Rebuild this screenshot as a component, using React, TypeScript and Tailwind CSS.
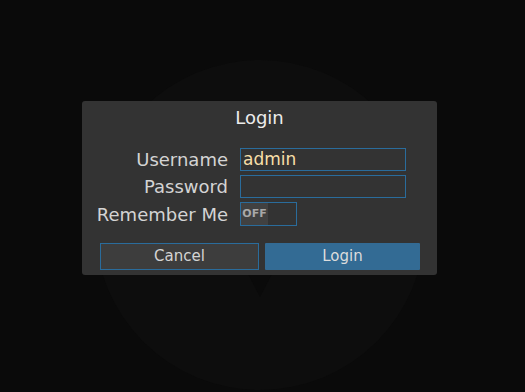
export default function App() {
  const font = { fontFamily: '"DejaVu Sans", "Noto Sans", sans-serif' };
  return (
    <div
      className="relative w-[525px] h-[392px] bg-[#0a0a0a] overflow-hidden"
      style={font}
    >
      {/* faint logo behind the dialog */}
      <svg
        className="absolute left-0 top-0"
        width="525"
        height="392"
        viewBox="0 0 525 392"
      >
        <circle cx="260" cy="225" r="165" fill="#0d0d0d" />
        <polygon points="247,272 273,272 260,297" fill="#0a0a0a" />
      </svg>

      <div className="relative pt-[101px] pl-[82px]">
        <div className="w-[355px] h-[174px] bg-[#333333] rounded-[3px] flex flex-col">
          <div className="h-[32px] flex items-center justify-center text-[18px] text-[#ececec]">
            Login
          </div>
          <div className="mt-[15px] flex flex-col gap-[4px]">
            <div className="flex items-center gap-[12px]">
              <div className="w-[146px] text-right text-[18px] text-[#d4d4d4] leading-[23px]">
                Username
              </div>
              <div className="w-[166px] h-[23px] border border-[#2a6c9c] flex items-center px-[2px] text-[17px] text-[#f8dfa8]">
                admin
              </div>
            </div>
            <div className="flex items-center gap-[12px]">
              <div className="w-[146px] text-right text-[18px] text-[#d4d4d4] leading-[23px]">
                Password
              </div>
              <div className="w-[166px] h-[23px] border border-[#2a6c9c]" />
            </div>
            <div className="flex items-center gap-[12px]">
              <div className="w-[146px] text-right text-[18px] text-[#d4d4d4] leading-[23px]">
                Remember Me
              </div>
              <div className="w-[57px] h-[24px] border border-[#2a6c9c] flex">
                <div className="w-[27px] h-full bg-[#414141] flex items-center justify-center text-[11px] font-semibold text-[#a8a8a8]">
                  OFF
                </div>
              </div>
            </div>
          </div>
          <div className="mt-[17px] ml-[18px] flex gap-[6px]">
            <button className="w-[159px] h-[27px] bg-[#3d3d3d] border border-[#2a6c9c] text-[15px] text-[#d4d4d4]">
              Cancel
            </button>
            <button className="w-[155px] h-[27px] bg-[#336b94] text-[15px] text-[#dcdcdc] rounded-[1px]">
              Login
            </button>
          </div>
        </div>
      </div>
    </div>
  );
}
